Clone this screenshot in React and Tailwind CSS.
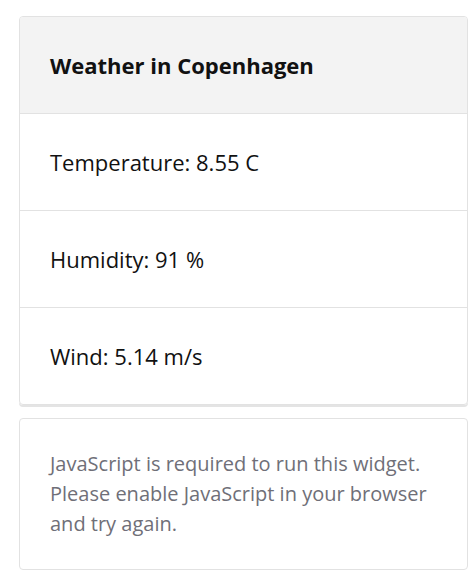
const ROWS = ['Temperature: 8.55 C', 'Humidity: 91 %', 'Wind: 5.14 m/s'];

export default function App() {
  return (
    <div className="min-h-screen bg-white pt-4 pl-[19px] pr-[1px] font-['Open_Sans',sans-serif] text-[#111]">
      <div className="rounded border border-[#e2e2e2] shadow-[0_2px_0_#e4e4e4] overflow-hidden">
        <div className="bg-[#f3f3f3] px-[30px] py-[30px] text-[22px] leading-9 font-bold border-b border-[#e2e2e2]">
          Weather in Copenhagen
        </div>
        {ROWS.map((r, i) => (
          <div
            key={r}
            className={`px-[30px] py-[30px] text-[22px] leading-9 ${i < ROWS.length - 1 ? 'border-b border-[#e2e2e2]' : ''}`}
          >
            {r}
          </div>
        ))}
      </div>
      <div className="mt-[13px] rounded border border-[#e2e2e2] px-[30px] py-[30px] text-[20px] leading-[30px] text-[#6f6f78]">
        JavaScript is required to run this widget. Please enable JavaScript in your browser and try again.
      </div>
    </div>
  );
}
